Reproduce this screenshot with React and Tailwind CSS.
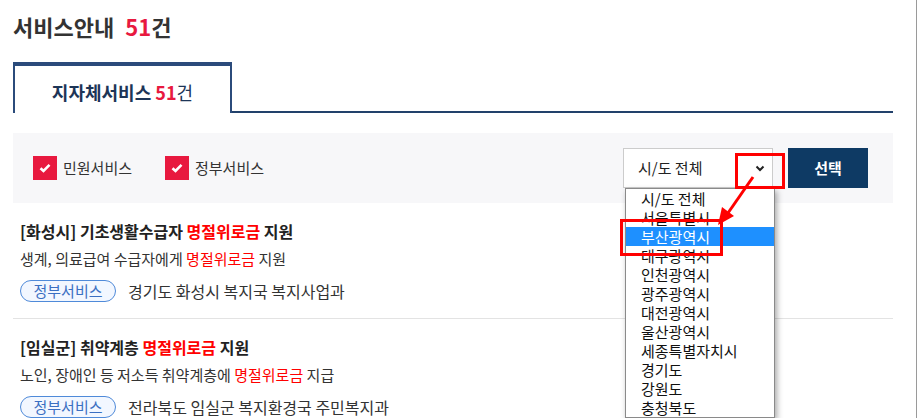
import React, { useState } from "react";

const FONT = { fontFamily: '"Noto Sans CJK KR", "Noto Sans", sans-serif' };

const REGIONS = [
  "시/도 전체",
  "서울특별시",
  "부산광역시",
  "대구광역시",
  "인천광역시",
  "광주광역시",
  "대전광역시",
  "울산광역시",
  "세종특별자치시",
  "경기도",
  "강원도",
  "충청북도",
];

const SERVICES = [
  {
    region: "화성시",
    title: "기초생활수급자",
    titleTail: "지원",
    desc: "생계, 의료급여 수급자에게",
    descTail: "지원",
    dept: "경기도 화성시 복지국 복지사업과",
  },
  {
    region: "임실군",
    title: "취약계층",
    titleTail: "지원",
    desc: "노인, 장애인 등 저소득 취약계층에",
    descTail: "지급",
    dept: "전라북도 임실군 복지환경국 주민복지과",
  },
];

function CheckBox({ label }) {
  return (
    <label className="flex items-center gap-[6px] text-[15px] leading-[24px] text-[#333]">
      <span className="flex h-[24px] w-[24px] items-center justify-center bg-[#e8193f]">
        <svg width="12" height="10" viewBox="0 0 12 10">
          <path d="M1.5 5.2 L4.5 8 L10.5 1.8" fill="none" stroke="#fff" strokeWidth="2.6" />
        </svg>
      </span>
      {label}
    </label>
  );
}

function ServiceItem({ item }) {
  return (
    <div className="border-b border-[#e3e3e3] pl-[7px] pt-[16px] pb-[16px]">
      <p className="text-[16px] font-bold leading-[24px] text-[#222]">
        [{item.region}] {item.title} <span className="text-[#ff0000]">명절위로금</span> {item.titleTail}
      </p>
      <p className="mt-[5px] text-[15px] leading-[22px] text-[#333]">
        {item.desc} <span className="text-[#ff0000]">명절위로금</span> {item.descTail}
      </p>
      <div className="mt-[10px] flex items-center gap-[12px]">
        <span className="flex h-[22px] w-[96px] items-center justify-center rounded-full border border-[#4f8ad9] bg-[#f2f7ff] text-[15px] text-[#3b6fc2]">
          정부서비스
        </span>
        <span className="text-[16px] leading-[22px] text-[#333]">{item.dept}</span>
      </div>
    </div>
  );
}

export default function App() {
  const [picked] = useState(2);

  return (
    <div className="relative flex h-[418px] w-[921px] overflow-hidden bg-white" style={FONT}>
      <div className="w-[916px] pl-[13px] pr-[23px]">
        <h1 className="pt-[12px] text-[22px] font-semibold leading-[28px] text-[#333]">
          서비스안내 <span className="ml-[6px] font-bold text-[#e8193f]">51</span>건
        </h1>

        {/* tab bar */}
        <div className="mt-[22px] flex items-end">
          <div className="h-[51px] w-[219px] border-x-2 border-t-4 border-[#2b4b7b] pt-[14px] text-center text-[18px] leading-[24px]">
            <span className="font-bold text-[#1d3557]">지자체서비스 </span>
            <span className="font-bold text-[#e8193f]">51</span>
            <span className="text-[#1d3557]">건</span>
          </div>
          <div className="flex-1 border-b-2 border-[#22416b]" />
        </div>

        {/* filter panel */}
        <div className="mt-[20px] flex h-[70px] items-center bg-[#f7f7f9] pl-[20px] pr-[25px]">
          <div className="flex items-center gap-[33px]">
            <CheckBox label="민원서비스" />
            <CheckBox label="정부서비스" />
          </div>
          <div className="ml-auto flex items-center gap-[15px]">
            <div className="flex h-[40px] w-[150px] items-center justify-between border border-[#cccccc] bg-white pl-[14px] pr-[7px] text-[15px] text-[#222]">
              시/도 전체
              <svg width="10" height="7" viewBox="0 0 10 7">
                <path d="M1.5 1.5 L5 5 L8.5 1.5" fill="none" stroke="#222" strokeWidth="2" />
              </svg>
            </div>
            <button className="h-[40px] w-[80px] bg-[#0e3a64] text-[15px] font-bold text-white">선택</button>
          </div>
        </div>

        {SERVICES.map((item) => (
          <ServiceItem key={item.region} item={item} />
        ))}
      </div>
      <div className="w-px bg-[#9a9a9a]" />

      {/* open select list */}
      <ul className="absolute left-[625px] top-[188px] w-[150px] border border-[#8a8a8a] bg-white shadow-[2px_3px_6px_rgba(0,0,0,0.35)]">
        {REGIONS.map((name, i) => (
          <li
            key={name}
            className={`h-[19px] pl-[15px] text-[15px] leading-[19px] ${
              i === picked ? "bg-[#1e90ff] text-white" : "text-[#111]"
            }`}
          >
            {name}
          </li>
        ))}
      </ul>

      {/* red callouts */}
      <div className="absolute left-[735px] top-[153px] h-[36px] w-[50px] border-[3px] border-[#ff0000]" />
      <div className="absolute left-[620px] top-[219px] h-[37px] w-[103px] border-[3px] border-[#ff0000]" />
      <svg className="absolute left-0 top-0" width="921" height="418" viewBox="0 0 921 418">
        <line x1="753" y1="177" x2="728" y2="213" stroke="#ff0000" strokeWidth="3" />
        <polygon points="718,225 722,207 734,216" fill="#ff0000" />
      </svg>
    </div>
  );
}
